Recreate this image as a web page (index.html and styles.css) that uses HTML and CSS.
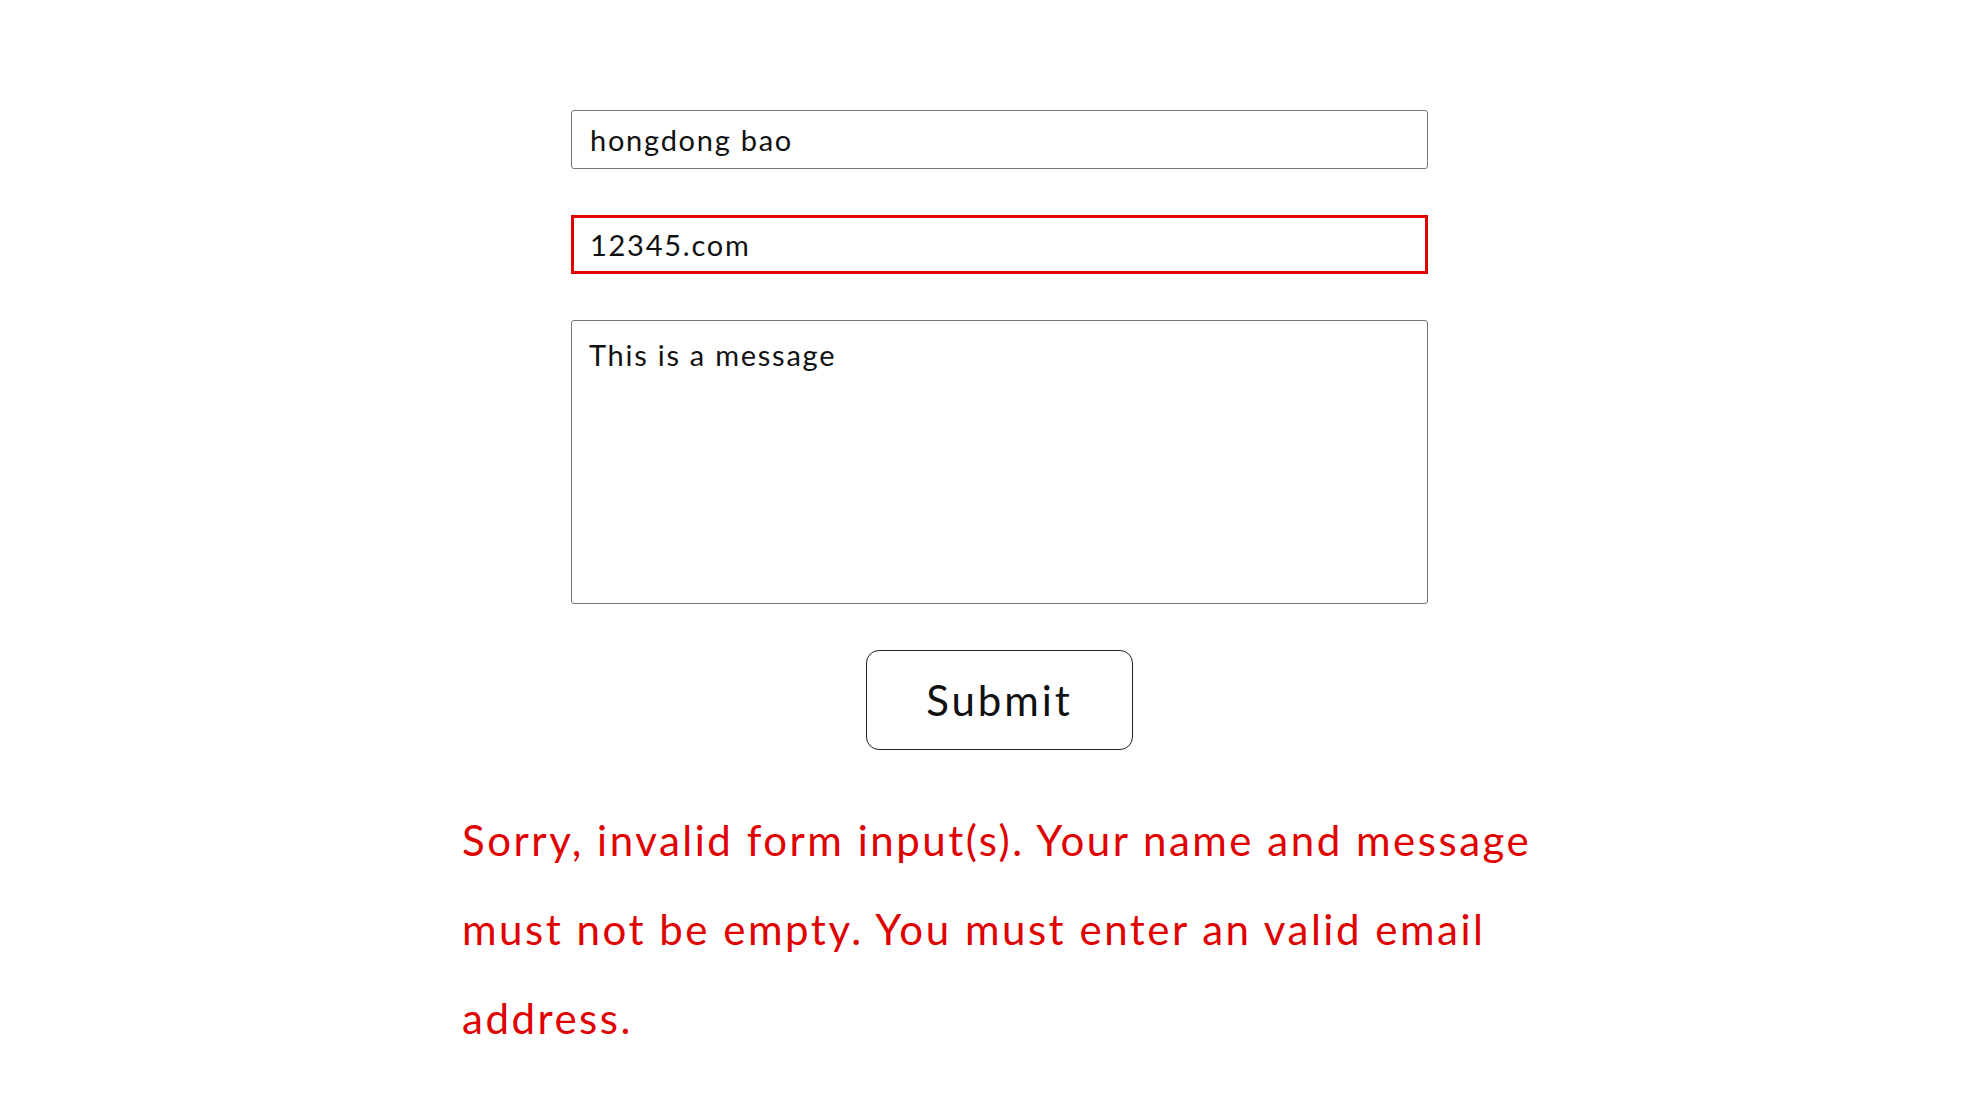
FILE: index.html
```html
<!DOCTYPE html>
<html lang="en">
<head>
<meta charset="utf-8">
<title>Contact</title>
<link rel="stylesheet" href="styles.css">
</head>
<body>
<main class="page">
  <form class="contact-form">
    <input class="field" type="text" value="hongdong bao">
    <input class="field field-invalid" type="text" value="12345.com">
    <textarea class="field field-area">This is a message</textarea>
    <button class="submit" type="button">Submit</button>
  </form>
  <p class="error">Sorry, invalid form input(s). Your name and message must not be empty. You must enter an valid email address.</p>
</main>
</body>
</html>
```

FILE: styles.css
```css
html, body {
  margin: 0;
  padding: 0;
  background: #ffffff;
}

body {
  font-family: Lato, "Open Sans", "Liberation Sans", sans-serif;
  font-weight: 400;
  color: #111111;
}

.page {
  padding: 110px 0 0 13px;
  display: flex;
  flex-direction: column;
  align-items: center;
}

.contact-form {
  width: 857px;
  display: flex;
  flex-direction: column;
  align-items: center;
  gap: 46px;
}

.field {
  box-sizing: border-box;
  width: 100%;
  height: 59px;
  margin: 0;
  padding: 0 18px;
  border: 1px solid #767676;
  border-radius: 3px;
  font-family: inherit;
  font-weight: inherit;
  font-size: 29px;
  letter-spacing: 0.06em;
  color: #111111;
  background: #ffffff;
  outline: none;
}

.field-invalid {
  border: 3px solid #e00000;
  border-radius: 0;
  padding: 0 16px;
}

.field-area {
  height: 284px;
  padding: 16px 17px;
  resize: none;
  line-height: 1.25;
}

.submit {
  box-sizing: border-box;
  width: 267px;
  height: 100px;
  border: 1px solid #222222;
  border-radius: 13px;
  background: #ffffff;
  font-family: inherit;
  font-weight: inherit;
  font-size: 42px;
  letter-spacing: 0.07em;
  color: #111111;
  cursor: pointer;
}

.error {
  width: 1075px;
  margin: 46px 0 0 0;
  font-size: 42px;
  letter-spacing: 0.06em;
  line-height: 89px;
  color: #e00000;
}
```
